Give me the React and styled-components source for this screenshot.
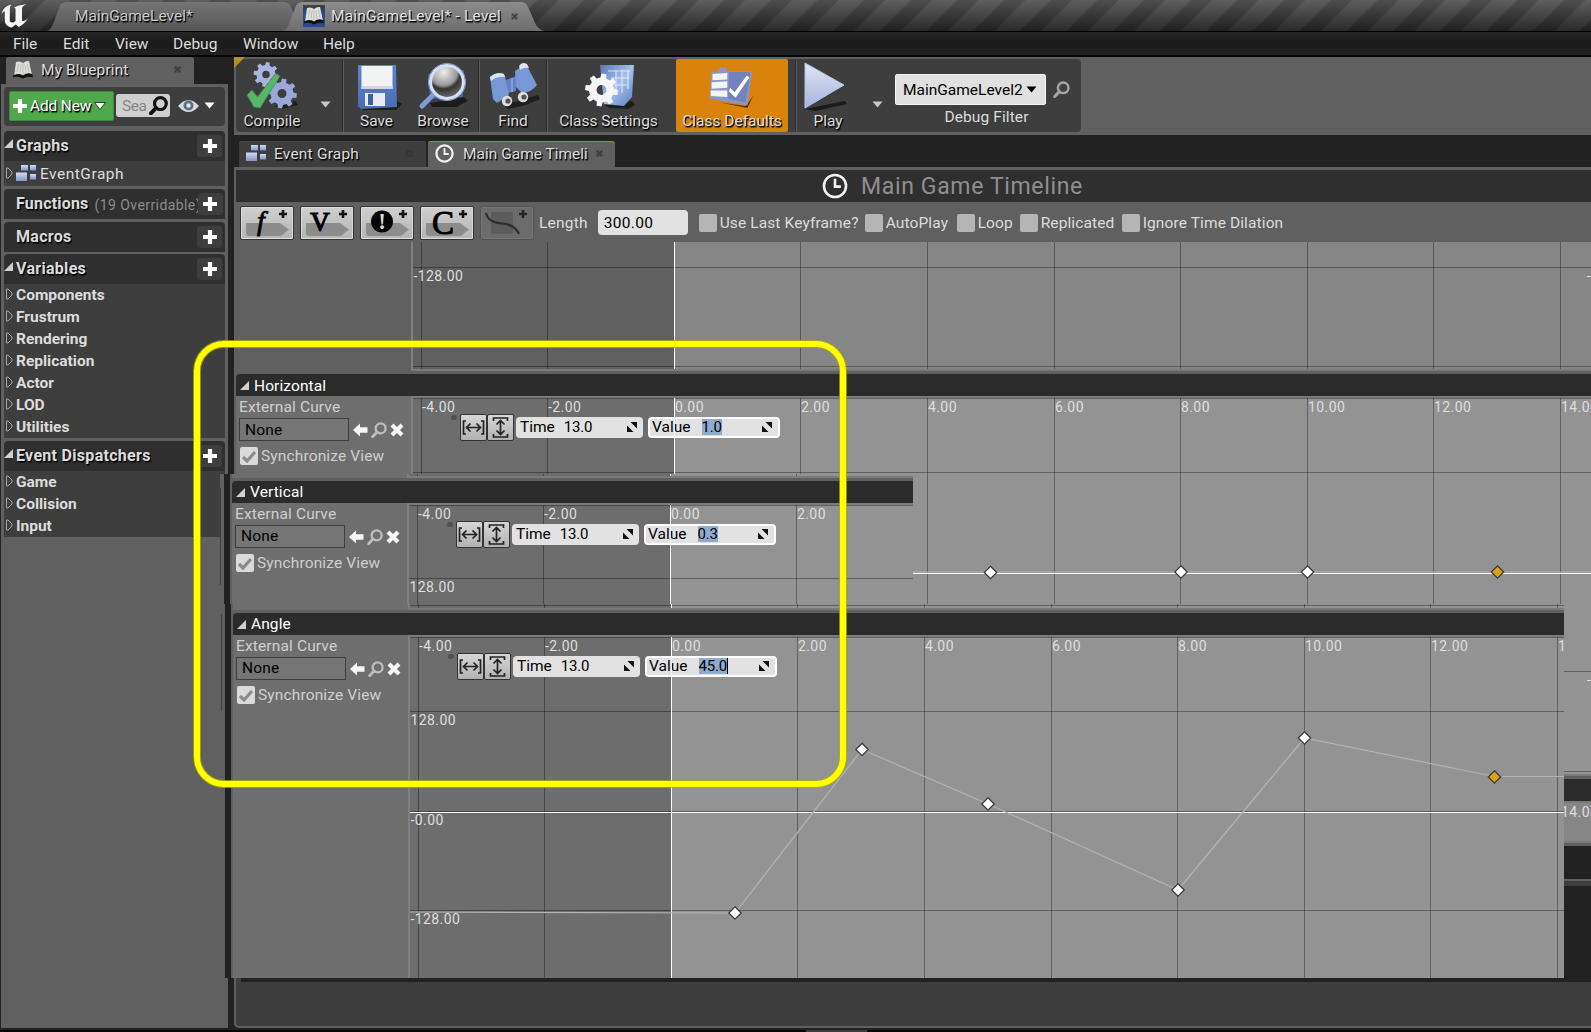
import React from 'react';
import styled, { createGlobalStyle, css } from 'styled-components';

const Global = createGlobalStyle`
  * { box-sizing: border-box; }
  body { margin: 0; background: #222; overflow: hidden; }
`;

const c = {
  frame: '#606060',
  panel: '#3e3e3e',
  dark: '#222222',
  header: '#2f2f2f',
  light: '#dcdcdc',
};
const shadow = css`text-shadow: 1px 1px 0 #000, 1px 2px 1px rgba(0,0,0,.6);`;

/* ---------- window frame ---------- */
const Window = styled.div`
  position: relative;
  width: 1591px;
  height: 1032px;
  display: flex;
  flex-direction: column;
  overflow: hidden;
  background: ${c.dark};
  color: ${c.light};
  font: 15.5px/20px Roboto, "Liberation Sans", sans-serif;
  white-space: nowrap;
`;
const TitleBar = styled.div`
  height: 31px;
  flex: none;
  display: flex;
  align-items: flex-end;
  background:
    linear-gradient(180deg, rgba(255,255,255,.12), rgba(0,0,0,.42)),
    repeating-linear-gradient(135deg, #484848 0 16px, #363636 18px 31px, #484848 33px);
`;
const LogoBox = styled.div`width: 46px; height: 31px; svg { display: block; }`;
const WinTab = styled.div`
  position: relative;
  z-index: ${p => (p.$active ? 2 : 1)};
  width: ${p => p.$w}px;
  margin-left: ${p => p.$ml || 0}px;
  height: 29px;
  display: flex;
  align-items: center;
  padding: 0 0 1px ${p => p.$pl}px;
  color: ${p => (p.$active ? '#e2e2e2' : '#c8c8c8')};
  ${shadow}
  > svg.shape { position: absolute; left: 0; top: 0; z-index: -1; }
`;
const TabText = styled.span`letter-spacing: ${p => p.$ls || 0}px; margin-left: ${p => p.$ml || 0}px;`;
const Close = styled.span`
  margin-left: auto;
  margin-right: ${p => p.$mr}px;
  display: flex;
`;
const MenuBar = styled.div`
  height: 26px;
  flex: none;
  display: flex;
  align-items: center;
  padding: 0 0 1px 13px;
  border-top: 1px solid #000;
  border-bottom: 2px solid #060606;
  background: linear-gradient(#262626, #1b1b1b 50%, #222);
`;
const MenuItem = styled.span`width: ${p => p.$w}px; padding-top: 2px;`;
const Main = styled.div`flex: 1; min-height: 0; display: flex;`;
const Status = styled.div`
  height: 4px;
  flex: none;
  border-top: 2px solid #222;
  background: #070505;
  padding-left: 806px;
  &::before { content: ''; display: block; width: 61px; height: 2px; background: #3c3c3c; }
`;
const Divider = styled.div`width: 6px; flex: none; background: #222;`;

/* ---------- blueprint side panel ---------- */
const Side = styled.div`
  width: 228px;
  flex: none;
  display: flex;
  flex-direction: column;
  padding-left: 1px;
  background: ${c.dark};
`;
const SideTab = styled.div`
  width: 188px;
  height: 27px;
  margin-left: 5px;
  display: flex;
  align-items: center;
  padding: 0 0 2px 6px;
  background: ${c.frame};
  border-radius: 2px 2px 0 0;
  ${shadow}
`;
const SideBody = styled.div`
  flex: 1;
  padding: 3px 3px 0 3px;
  display: flex;
  flex-direction: column;
  background: ${c.frame};
`;
const SideTools = styled.div`
  height: 39px;
  display: flex;
  align-items: center;
  padding: 0 0 2px 5px;
  margin-bottom: 5px;
  background: ${c.panel};
  border-radius: 4px;
`;
const AddNew = styled.div`
  width: 105px;
  height: 30px;
  display: flex;
  align-items: center;
  gap: 3px;
  padding-left: 3px;
  letter-spacing: -.15px;
  color: #fff;
  background: #4fa84b;
  border: 1px solid #3d8a3a;
  border-radius: 2px;
  ${shadow}
`;
const Search = styled.div`
  width: 54px;
  height: 23px;
  margin: 0 8px 0 2px;
  display: flex;
  align-items: center;
  padding-left: 6px;
  gap: 3px;
  letter-spacing: -.5px;
  color: #888;
  background: #cfcfcf;
  border-radius: 3px;
`;
const Eye = styled.div`display: flex; align-items: center; gap: 5px;`;
const Section = styled.div`
  display: flex;
  align-items: center;
  height: 30px;
  margin-top: ${p => p.$gap || 0}px;
  padding-right: 3px;
  background: ${c.header};
  border-radius: 4px 4px 0 0;
  font-size: 16px;
  font-weight: 700;
  letter-spacing: ${p => p.$ls ?? 0.3}px;
  ${shadow}
`;
const Arrow = styled.span`width: 12px; height: 12px; display: flex; flex: none; margin-bottom: 2px;`;
const Hint = styled.span`
  color: #8c8c8c;
  font-size: 14px;
  font-weight: 400;
  letter-spacing: .42px;
  margin-left: 6px;
  padding-top: 2px;
  text-shadow: none;
`;
const Plus = styled.span`
  width: 25px;
  height: 22px;
  flex: none;
  margin-left: auto;
  display: flex;
  align-items: center;
  justify-content: center;
  background: #3e3e3e;
  border-radius: 3px;
  ${Hint} + & { margin-left: -3px; }
`;
const Row = styled.div`
  height: ${p => p.$h || 22}px;
  display: flex;
  align-items: center;
  background: ${c.panel};
  font-weight: ${p => (p.$h ? 400 : 700)};
`;

/* ---------- editor ---------- */
const Editor = styled.div`flex: 1; min-width: 0; display: flex; flex-direction: column;`;
const ToolStrip = styled.div`
  position: relative;
  height: 78px;
  flex: none;
  padding: 2px;
  background: ${c.frame};
  &::after {
    content: '';
    position: absolute;
    left: 0;
    top: 0;
    border: solid transparent;
    border-width: 0 11px 11px 0;
    border-left: 0;
    border-top: 11px solid #b48f24;
    border-bottom: 0;
  }
`;
const Tools = styled.div`
  width: 845px;
  height: 73px;
  display: flex;
  background: ${c.panel};
  border-radius: 4px;
`;
const Tool = styled.div`
  width: ${p => p.$w}px;
  height: 73px;
  display: flex;
  flex-direction: column;
  align-items: center;
  background: ${p => (p.$on ? '#d9830c' : 'transparent')};
  border-radius: 2px;
  ${shadow}
  > svg { height: 51px; flex: none; overflow: visible; margin-left: ${p => p.$shift || 0}px; }
  > span { padding-top: .6px; }
`;
const Caret = styled.div`width: ${p => p.$w}px; padding: ${p => p.$pt || 34}px 0 0 ${p => p.$pl}px;`;
const Sep = styled.div`width: 2px; margin: 1px ${p => p.$m || 0}px 0 0; background: #5c5c5c; border-left: 1px solid #2b2b2b;`;
const Debug = styled.div`display: flex; flex-direction: column; padding-top: 15px;`;
const DebugRow = styled.div`display: flex; align-items: center; gap: 7px;`;
const Select = styled.div`
  width: 151px;
  height: 31px;
  display: flex;
  align-items: center;
  gap: 3px;
  padding-left: 7px;
  color: #000;
  background: #e0e0e0;
  border: 1px solid #f4f4f4;
  border-radius: 2px;
`;
const DebugLabel = styled.div`width: 183px; text-align: center; padding-top: 2px; letter-spacing: .1px;`;
const Tabs = styled.div`
  height: 32px;
  flex: none;
  display: flex;
  align-items: flex-end;
  gap: 2px;
  padding-left: 5px;
  background: ${c.dark};
`;
const Tab = styled.div`
  width: 187px;
  height: 26px;
  display: flex;
  align-items: center;
  padding: 0 0 2px 7px;
  background: ${p => (p.$on ? c.frame : c.panel)};
  border-top: 1px solid ${p => (p.$on ? '#a88a2e' : '#4a4a4a')};
  border-radius: 3px 3px 0 0;
  ${shadow}
`;
const DocTitle = styled.div`
  height: 35px;
  flex: none;
  display: flex;
  align-items: center;
  gap: 13px;
  padding: 0 0 0 586px;
  border-top: 3px solid ${c.frame};
  border-left: 2px solid ${c.frame};
  background: ${c.header};
  color: #8f8f8f;
  font-size: 23px;
  letter-spacing: .65px;
  > span { padding-top: 1px; }
`;
const CurveBar = styled.div`
  height: 40px;
  flex: none;
  display: flex;
  align-items: center;
  padding: 1px 0 0 6px;
  background: ${c.frame};
`;
const AddTrack = styled.div`
  width: 54px;
  height: 34px;
  margin-right: ${p => (p.$off ? 5 : 6)}px;
  flex: none;
  opacity: ${p => (p.$off ? 0.75 : 1)};
  background: ${p => (p.$off ? '#707070' : 'linear-gradient(#cfcfcf, #b4b4b4)')};
  border: 1px solid ${p => (p.$off ? '#505050' : '#333')};
  box-shadow: inset 0 0 0 1px ${p => (p.$off ? '#7d7d7d' : '#dedede')};
  border-radius: 2px;
  svg { display: block; margin: -1px; }
`;
const LengthInput = styled.div`
  width: 90px;
  height: 25px;
  margin: 0 11px 0 10px;
  padding: 3px 6px 0;
  color: #000;
  background: #e2e2e2;
  border-radius: 4px;
  letter-spacing: .35px;
`;
const Check = styled.span`
  width: 18px;
  height: 18px;
  flex: none;
  display: flex;
  align-items: center;
  justify-content: center;
  background: ${p => (p.$on ? '#dadada' : '#b5b5b5')};
  border-radius: 2px;
`;
const CheckLabel = styled.span`width: ${p => p.$w}px; padding-left: 3px; letter-spacing: .12px;`;

/* ---------- tracks ---------- */
const TrackBox = styled.div`background: ${c.frame}; padding-left: 2px; flex: none;`;
const TrackHead = styled.div`
  height: 22px;
  display: flex;
  align-items: center;
  gap: 5px;
  padding: ${p => (p.$raised ? 0 : 1)}px 0 0 4px;
  letter-spacing: .1px;
  color: #fff;
  background: #2b2b2b;
  border-radius: 4px 0 0 0;
`;
const TrackBody = styled.div`display: flex; background: ${p => (p.$dim ? '#606060' : '#6e6e6e')};`;
const TrackSide = styled.div`width: 175px; flex: none; padding: 1px 0 0 3px;`;
const CurveRow = styled.div`
  display: flex;
  align-items: center;
  gap: 3px;
  margin-top: ${p => p.$mt || 0}px;
  margin-left: ${p => p.$ml || 0}px;
  color: #cfcfcf;
  letter-spacing: .14px;
`;
const NoneBox = styled.div`
  width: 110px;
  height: 23px;
  padding: ${p => (p.$raised ? 0 : 1)}px 0 0 5px;
  color: #000;
  background: #757575;
  border: 1px solid #3e3e3e;
`;
const AssetIcons = styled.div`display: flex; align-items: center; gap: 3px; padding-left: 1px;`;
const ChartBox = styled.div`
  position: relative;
  flex: 1;
  border: solid #7b7b7b;
  border-width: ${p => (p.$top ? 2 : 0)}px 0 2px 2px;
  border-left-color: #808080;
  svg { display: block; }
`;
const Gap = styled.div`height: 3px;`;
const KeyEditor = styled.div`
  position: absolute;
  left: 40px;
  top: 16px;
  height: 27px;
  display: flex;
  align-items: center;
  color: #000;
`;
const Dot = styled.span`width: 6px; height: 5px; margin: -21px 0 0 -2px; border-radius: 3px; background: #505050;`;
const Fit = styled.span`
  width: 27px;
  height: 27px;
  margin-left: ${p => p.$ml}px;
  background: linear-gradient(#d6d6d6, #b2b2b2);
  border: 1px solid #333;
  border-radius: 2px;
  svg { margin: -1px; }
`;
const Field = styled.span`
  width: ${p => p.$w}px;
  height: 21px;
  margin: -1px 0 0 ${p => p.$ml}px;
  display: flex;
  align-items: center;
  padding: 0 5px 0 ${p => (p.$hot ? 2 : 4)}px;
  background: #e2e2e2;
  border: ${p => (p.$hot ? '2px solid #fff' : '0')};
  border-radius: 4px;
  > svg { margin-left: auto; }
`;
const Value = styled.span`
  margin-left: ${p => p.$ml}px;
  font-size: 15px;
  line-height: 16px;
  letter-spacing: -.2px;
  background: ${p => (p.$hot ? '#8fabcd' : 'transparent')};
  border-right: ${p => (p.$caret ? '1px solid #000' : '0')};
`;
const Playhead = styled.span`position: absolute; left: 261px; top: 16px; width: 1px; height: 27px; background: rgba(255,255,255,.75);`;

/* bars visible beneath the track list */
const AfterTracks = styled.div`height: 33px; flex: none; background: ${c.dark};`;
const Lower = styled.div`
  flex: 1;
  padding: 5px 0 44px 5px;
  display: flex;
  background: ${c.panel};
  border: solid ${c.frame};
  border-width: 2px 0 2px 2px;
  border-radius: 0 0 0 5px;
`;
const LowerInner = styled.div`flex: 1; background: ${c.dark};`;

/* floating strips stacked above the window */
const Strip = styled.div`
  position: absolute;
  left: ${p => p.$x}px;
  top: ${p => p.$y}px;
  width: ${p => p.$w}px;
  height: ${p => p.$h}px;
  display: flex;
  overflow: hidden;
`;
const Gutter = styled.div`
  width: 4px;
  flex: none;
  background: linear-gradient(#3e3e3e, #3e3e3e) ${p => p.$lx}px ${p => p.$ly}px / 1px 97px no-repeat, ${c.frame};
`;
const StripBody = styled.div`flex: 1; min-width: 0;`;
const Highlight = styled.div`
  position: absolute;
  left: 194px;
  top: 341px;
  width: 652px;
  height: 446px;
  border: 6px solid #ffff00;
  border-radius: 30px;
  box-shadow: 0 0 0 1px rgba(175,175,0,.75), inset 0 0 0 1px rgba(175,175,0,.75);
`;

/* ---------- small drawings ---------- */
const Tri = ({ w = 12, h = 7, fill = '#ddd', line }) => (
  <svg width={w} height={h}><path d={`M0.5 0.5H${w - 0.5}L${w / 2} ${h - 0.5}Z`} fill={fill} stroke={line || 'none'} /></svg>
);
const Open = ({ s = 9 }) => <svg width={s} height={s}><path d={`M${s} 0V${s}H0Z`} fill="#d0d0d0" /></svg>;
const Shut = () => <svg width="10" height="12"><path d="M2.500 1V11H4L8 7V5L4 1Z" fill="none" stroke="#a5a5a5" /></svg>;
const Cross = () => <svg width="14" height="14"><path d="M0 7H14M7 0V14" stroke="#fff" strokeWidth="4.200" /></svg>;
const X = () => <svg width="7" height="7"><rect width="7" height="7" fill="rgba(0,0,0,.12)" /><path d="M1 1L6 6M6 1L1 6" stroke="#3a3a3a" strokeWidth="1.300" /></svg>;
const Lens = ({ s = 18, color = '#111', w = 2.8 }) => (
  <svg width={s} height={s} viewBox="0 0 18 18">
    <circle cx="10.800" cy="7.200" r="5.600" fill="none" stroke={color} strokeWidth={w} />
    <path d="M6.500 11.500L1.800 16.500" stroke={color} strokeWidth={w + 0.6} strokeLinecap="round" />
  </svg>
);
const Book = ({ blue }) => (
  <svg width="22" height="22" viewBox="0 0 22 22">
    {blue && <rect width="22" height="22" fill="#274a8c" />}
    {blue && <rect width="22" height="5" fill="#3b3f48" />}
    <path d="M1 17L4 4Q8 2 11 4.500Q14 2 18 4L21 17Q16 15 11 18Q6 15 1 17Z" fill="#111" transform="translate(0,1.500)" />
    <path d="M2 16L4 3Q8 1.500 11 4Q14 1.500 17 2L20 15Q15 13 11 16.500Q7 14 2 16Z" fill="#dededa" />
    <path d="M11 4V16M6.500 5L5 13M9 5.500L8 13.500M13 5.500L14 13.500M15.500 5L17 13" stroke="#b4b4ae" strokeWidth=".8" fill="none" />
  </svg>
);
const Clock = ({ s, w = 2.4 }) => (
  <svg width={s} height={s} viewBox="0 0 20 20"><circle cx="10" cy="10" r="8.500" fill="none" stroke="#f2f2f2" strokeWidth={w} /><path d="M10 4.500V10.500H14.500" fill="none" stroke="#f2f2f2" strokeWidth="2" /></svg>
);
const GraphIcon = () => (
  <svg width="21" height="17" viewBox="0 0 21 17">
    <defs><linearGradient id="gi" x2="0" y2="1"><stop stopColor="#d7dcee" /><stop offset="1" stopColor="#8094cf" /></linearGradient></defs>
    <g fill="url(#gi)"><rect x="5" y="0" width="7" height="5.500" /><rect x="14" y="0" width="6" height="5.500" /><rect x="0" y="7.500" width="11" height="8.500" /><rect x="14" y="9" width="6" height="5.500" /></g>
  </svg>
);
const Logo = () => (
  <svg width="30" height="31" viewBox="0 0 30 31">
    <path d="M1.500 14C3 8.500 6.500 5.500 11.500 4.500C10 6.500 9.800 7.500 9.800 9V20.500C9.800 22.500 12.500 23.500 15.500 21V9.500C15.500 8 14.800 7.600 13.500 8C16.500 5.800 19.500 5.500 26.500 4C22.400 6 22 7.500 22 9.500V20C22 21.800 24 21.500 28 18.500C25 23 21.500 25.500 18.500 27L15.800 24.500L11.800 27.500C8 27 4.800 24.500 4.800 20.500V12C4.800 10.500 3.500 11.200 1.500 14Z" fill="#f5f5f5" />
  </svg>
);
const gear = (cx, cy, r, n = 8) => {
  const pts = [];
  for (let i = 0; i < n; i++) {
    [[-0.30, 0.76], [-0.19, 1], [0.19, 1], [0.30, 0.76]].forEach(([o, k]) => {
      const a = ((i + o) * 2 * Math.PI) / n + 0.15;
      pts.push(`${(cx + Math.cos(a) * r * k).toFixed(1)} ${(cy + Math.sin(a) * r * k).toFixed(1)}`);
    });
  }
  const h = r * 0.3;
  return `M${pts.join('L')}ZM${cx - h} ${cy}a${h} ${h} 0 1 0 ${2 * h} 0a${h} ${h} 0 1 0 ${-2 * h} 0Z`;
};
const Blue = () => (
  <defs>
    <linearGradient id="bd" x2="0" y2="1"><stop stopColor="#5f84cc" /><stop offset="1" stopColor="#4a6db5" /></linearGradient>
    <linearGradient id="ply" x2="0" y2="1"><stop stopColor="#dfe5f2" /><stop offset="1" stopColor="#a6b4de" /></linearGradient>
    <radialGradient id="gl" cx=".4" cy=".2" r=".85"><stop stopColor="#eee" /><stop offset=".48" stopColor="#999" /><stop offset=".6" stopColor="#333" /><stop offset="1" stopColor="#777" /></radialGradient>
    <linearGradient id="bg" x2="1" y2="1"><stop stopColor="#5578ba" /><stop offset=".5" stopColor="#a6c0ea" /><stop offset="1" stopColor="#5b7fc4" /></linearGradient>
  </defs>
);
const CompileIcon = () => (
  <svg width="52" height="51" viewBox="0 0 52 51"><Blue />
    <path d="M28 47L50 42L52 46L36 50Z" fill="#1e1e1e" />
    <path d={gear(20, 15.500, 12.5)} fill="#a6b6e0" fillRule="evenodd" />
    <path d={gear(36, 34.500, 15)} fill="#98a8d8" fillRule="evenodd" />
    <path d="M1 36L6 31L11.500 38L29 15L34 17L14 49L8 48Z" fill="#58b56a" stroke="#3c8f4e" strokeWidth=".8" />
  </svg>
);
const SaveIcon = () => (
  <svg width="44" height="51" viewBox="0 0 44 51">
    <path d="M4 46L42 42L47 45L41 51L8 51Z" fill="#1e1e1e" />
    <path d="M3 6H41L42 48L6 50L3 47Z" fill="url(#bd)" /><rect x="6.500" y="7" width="31" height="23" fill="#f3f3f3" /><rect x="6.500" y="27" width="31" height="3" fill="#cfd6e6" />
    <rect x="10" y="34" width="20" height="13" fill="#e9ecf3" /><rect x="13" y="35" width="5" height="11" fill="#3e5fa6" />
  </svg>
);
const BrowseIcon = () => (
  <svg width="50" height="51" viewBox="0 0 50 51">
    <path d="M12 44L46 38L50 42L38 48L14 48Z" fill="#1c1c1c" />
    <path d="M10 15L46 11L45 38L12 40Z" fill="#46619c" />
    <path d="M14 37L4 47" stroke="#7f9cdc" strokeWidth="5" strokeLinecap="round" />
    <circle cx="29" cy="23" r="16.500" fill="url(#gl)" stroke="#d5def2" strokeWidth="3.200" /><circle cx="29" cy="23" r="18.600" fill="none" stroke="#7d99d6" />
  </svg>
);
const FindIcon = () => (
  <svg width="50" height="51" viewBox="0 0 50 51">
    <path d="M16 46L50 36L52 40L38 46L20 50Z" fill="#1e1e1e" />
    <path d="M18 21L28 17V32L20 34Z" fill="#6382c4" /><path d="M24 19V33" stroke="#a8bce6" />
    <path d="M2 18Q9 12 17 17L21 36L9 44L5 40Z" fill="#7898d8" /><path d="M2 18Q9 12 16 15L17 18Q9 17 3 22Z" fill="#dfe5f0" />
    <path d="M27 12L38 5L49 26Q44 33 34 34L28 28Z" fill="#7898d8" /><path d="M31 7Q34 2 39 5L41 9Q36 8 32 11Z" fill="#dfe5f0" />
    <circle cx="19" cy="42" r="5.200" fill="#dedede" /><circle cx="20" cy="42" r="2.600" fill="#555" /><circle cx="35" cy="38" r="5.200" fill="#dedede" /><circle cx="36" cy="38" r="2.600" fill="#555" />
  </svg>
);
const SettingsIcon = () => (
  <svg width="50" height="51" viewBox="0 0 50 51">
    <path d="M20 46L48 42L51 46L44 50L26 49Z" fill="#1e1e1e" />
    <path d="M16 6H50L48 38L40 47L20 45Z" fill="url(#bg)" /><path d="M24 12H46M27 19H45M30 26H44M32 12V31M38 11V34M44 11V30" stroke="#dbe7fa" strokeWidth="1.200" />
    <path d={gear(17.5, 31, 16.5)} fill="#f6f6f6" fillRule="evenodd" />
  </svg>
);
const DefaultsIcon = () => (
  <svg width="46" height="51" viewBox="0 0 50 51">
    <path d="M14 45L42 49L50 38L44 51Z" fill="#5a3600" />
    <path d="M5 12L12 11L14 7H21L22 11L49 11L44 48L3 41Z" fill="#8797c9" /><path d="M24 12L47 12L42 45L23 41Z" fill="#7283bb" />
    <path d="M6 14L22 13V20L6 21ZM5 23L22 22V29L5 30ZM4 32L22 32V39L4 38Z" fill="#f4f4f4" /><path d="M25 29L30 34L43 16L46 18L31 40L24 33Z" fill="#fff" />
  </svg>
);
const PlayIcon = () => (
  <svg width="44" height="51" viewBox="0 0 44 51"><path d="M2 50L42 42L44 45L12 52Z" fill="#1a1a1a" /><path d="M2 4L41 26L2 49Z" fill="url(#ply)" stroke="#b7c4e8" /></svg>
);
const TrackIcon = ({ kind }) => (
  <svg width="54" height="34">
    {kind === 'curve'
      ? <rect x="11" y="6" width="22" height="22" fill="#5b5b5b" rx="2" />
      : <path d="M6 17H40L49 23.500L41 30H9Q6 30 6 27Z" fill="#8c8c8c" />}
    {kind === 'curve' && <path d="M6 7C8 15 14 17 22 17.500C31 18 36 22 39 28" fill="none" stroke="#1c1c1c" strokeWidth="2.200" />}
    {kind === '!' && <circle cx="22" cy="15.500" r="11" fill="#050505" />}
    <g fontFamily='"Liberation Serif", serif' textAnchor="middle" stroke="#000" strokeWidth=".5">
      {kind === 'f' && <text x="21" y="24" fontSize="28" fontStyle="italic" strokeWidth=".8">f</text>}
      {kind === 'V' && <text x="20" y="25" fontSize="27" strokeWidth="1.200">V</text>}
      {kind === 'C' && <text x="23" y="27.500" fontSize="33" strokeWidth="1">C</text>}
      {kind === '!' && <text x="22" y="23" fontSize="23" fontWeight="700" fill="#ddd" stroke="none">!</text>}
    </g>
    <path d="M39 8H47M43 4V12" stroke="#111" strokeWidth="2.600" />
  </svg>
);
const FitIcon = ({ v }) => (
  <svg width="27" height="27"><g fill="none" stroke="#222" strokeWidth="1.700" transform={v ? 'rotate(90 13.500 13.500)' : undefined}>
    <path d={v ? 'M7 6.500H4V20.500H7M20 6.500H23V20.500H20' : 'M6 7H3.500V20H6M21 7H23.500V20H21'} /><path d="M6.500 13.500H20.500M10.500 9.500L6.500 13.500L10.500 17.500M16.500 9.500L20.500 13.500L16.500 17.500" />
  </g></svg>
);
const Grow = () => <svg width="12" height="12"><path d="M4.500 1H11V7.500ZM1 4.500V11H7.500Z" fill="#111" /></svg>;
const EyeIcon = () => <svg width="21" height="14"><path d="M0 7Q10.500 -5 21 7Q10.500 19 0 7Z" fill="#dadada" /><circle cx="10.500" cy="6.500" r="5" fill="#5a6f8c" /><circle cx="10.500" cy="6.500" r="2.200" fill="#e8e8e8" /></svg>;
const TickIcon = () => <svg width="14" height="13"><path d="M1 7L5 11L13 2" fill="none" stroke="#8b8b8b" strokeWidth="3.200" /></svg>;
const AssetIcon = () => (
  <AssetIcons>
    <svg width="15" height="14"><path d="M0 7L7 .5V4.200H14.500V9.800H7V13.500Z" fill="#f6f6f6" /></svg>
    <Lens s={16} color="#bdbdbd" w={2.6} />
    <svg width="14" height="14"><path d="M2 2L12 12M12 2L2 12" stroke="#f6f6f6" strokeWidth="4.200" /></svg>
  </AssetIcons>
);

/* ---------- chart ---------- */
const ZERO = 261.3;
const STEP = 126.6;
function Chart({ h, dim, labels, rows = [], yLabels = [], zeroY, keys, line, dash }) {
  const ks = [-2, -1, 0, 1, 2, 3, 4, 5, 6, 7];
  return (
    <svg width="1178" height={h}>
      <rect width="261" height={h} fill={dim ? '#606060' : '#6d6d6d'} />
      <rect x="261" width="917" height={h} fill={dim ? '#868686' : '#939393'} />
      {rows.map(y => <rect key={y} y={y} width="1178" height="1" fill="#000" opacity=".34" />)}
      {ks.map(k => <rect key={k} x={Math.floor(ZERO + k * STEP)} width="1" height={h} fill={k ? '#000' : '#fff'} opacity={k ? 0.34 : 1} />)}
      {zeroY && <rect y={zeroY} width="1178" height="1" fill="#fff" />}
      {line && <polyline points={line} fill="none" stroke="#b3b3b3" strokeWidth="1.200" />}
      {keys && keys.map(([x, y], i) => (
        <path key={x} d={`M${x} ${y - 6.2}L${x + 6.2} ${y}L${x} ${y + 6.2}L${x - 6.2} ${y}Z`} fill={i === keys.length - 1 ? '#dba013' : '#fff'} stroke="#3a3a3a" strokeWidth="1.300" />
      ))}
      <g fill="#dedede" fontSize="14" letterSpacing=".4">
        {labels && ks.map(k => <text key={k} x={Math.floor(ZERO + k * STEP) + 1} y="14">{(k * 2).toFixed(2)}</text>)}
        {yLabels.map(([t, y]) => <text key={t} x="0.500" y={y}>{t}</text>)}
      </g>
      {dash && <rect x="1174" y={dash} width="4" height="1" fill="#e0e0e0" />}
    </svg>
  );
}

function Track({ name, value, caret, dim, raised, gap = true, ...chart }) {
  return (
    <TrackBox>
      {name && <TrackHead $raised={raised}><Open />{name}</TrackHead>}
      <TrackBody $dim={dim}>
        <TrackSide>
          {value && <>
            <CurveRow>External Curve</CurveRow>
            <CurveRow $mt={1}><NoneBox $raised={raised}>None</NoneBox><AssetIcon /></CurveRow>
            <CurveRow $mt={5} $ml={1}><Check $on><TickIcon /></Check><span>Synchronize View</span></CurveRow>
          </>}
        </TrackSide>
        <ChartBox $top={!!name}>
          <Chart dim={dim} {...chart} />
          {value && <>
            <KeyEditor>
              <Dot />
              <Fit $ml={3}><FitIcon /></Fit>
              <Fit $ml={0}><FitIcon v /></Fit>
              <Field $w={127} $ml={2}>Time<Value $ml={9}>13.0</Value><Grow /></Field>
              <Field $w={132} $ml={5} $hot>Value<Value $ml={11} $hot $caret={caret}>{value}</Value><Grow /></Field>
            </KeyEditor>
            <Playhead />
          </>}
        </ChartBox>
      </TrackBody>
      {gap && <Gap />}
    </TrackBox>
  );
}

const SECTIONS = [
  { name: 'Variables', gap: 2, rows: ['Components', 'Frustrum', 'Rendering', 'Replication', 'Actor', 'LOD', 'Utilities'] },
  { name: 'Event Dispatchers', gap: 3, rows: ['Game', 'Collision', 'Input'] },
];

function Sidebar() {
  return (
    <Side>
      <SideTab><Book /><TabText $ml={7} $ls={0.1}>My Blueprint</TabText><Close $mr={13}><X /></Close></SideTab>
      <SideBody>
        <SideTools>
          <AddNew><Cross />Add New<Tri w={12} h={8} fill="#fff" line="#1d4a1c" /></AddNew>
          <Search>Sea<Lens s={19} w={3} /></Search>
          <Eye><EyeIcon /><Tri w={11} h={7} fill="#fff" /></Eye>
        </SideTools>
        <Section><Arrow><Open /></Arrow>Graphs<Plus><Cross /></Plus></Section>
        <Row $h={25}><Arrow><Shut /></Arrow><GraphIcon /><TabText $ml={3} $ls={0.5}>EventGraph</TabText></Row>
        <Section $gap={3} $ls={0.2}><Arrow />Functions<Hint>(19 Overridable)</Hint><Plus><Cross /></Plus></Section>
        <Section $gap={3}><Arrow />Macros<Plus><Cross /></Plus></Section>
        {SECTIONS.map(s => (
          <React.Fragment key={s.name}>
            <Section $gap={s.gap}><Arrow><Open /></Arrow>{s.name}<Plus><Cross /></Plus></Section>
            {s.rows.map(r => <Row key={r}><Arrow><Shut /></Arrow>{r}</Row>)}
          </React.Fragment>
        ))}
      </SideBody>
    </Side>
  );
}

function Toolbar() {
  return (
    <ToolStrip>
      <Tools>
        <Tool $w={72}><CompileIcon /><span>Compile</span></Tool>
        <Caret $w={34} $pl={12}><Tri w={11} fill="#c8c8c8" /></Caret>
        <Sep $m={1} />
        <Tool $w={63}><SaveIcon /><span>Save</span></Tool>
        <Tool $w={70}><BrowseIcon /><span>Browse</span></Tool>
        <Sep $m={0} />
        <Tool $w={66} $shift={-1}><FindIcon /><span>Find</span></Tool>
        <Sep $m={0} />
        <Tool $w={121}><SettingsIcon /><span>Class Settings</span></Tool>
        <Caret $w={7} $pl={0} />
        <Tool $w={112} $on $shift={-5}><DefaultsIcon /><span>Class Defaults</span></Tool>
        <Caret $w={7} $pl={0} />
        <Sep $m={1} />
        <Tool $w={60} $shift={-6}><PlayIcon /><span>Play</span></Tool>
        <Caret $w={37} $pl={14}><Tri w={11} fill="#c8c8c8" /></Caret>
        <Debug>
          <DebugRow><Select>MainGameLevel2<Tri w={11} fill="#000" /></Select><Lens s={17} color="#a5a5a5" w={2.6} /></DebugRow>
          <DebugLabel>Debug Filter</DebugLabel>
        </Debug>
      </Tools>
    </ToolStrip>
  );
}

export default function App() {
  return (
    <Window>
      <Global />
      <TitleBar>
        <LogoBox><Logo /></LogoBox>
        <WinTab $w={250} $pl={29}>
          <svg className="shape" width="250" height="29"><defs><linearGradient id="t1" x2="0" y2="1"><stop stopColor="#757575" /><stop offset="1" stopColor="#565656" /></linearGradient></defs><path d="M0 29Q5 28 7 22L13 6Q15 0 20 0H238Q243 0 245 5L250 16V29Z" fill="url(#t1)" /></svg>
          <TabText>MainGameLevel*</TabText>
        </WinTab>
        <WinTab $w={264} $ml={-15} $pl={22} $active>
          <svg className="shape" width="264" height="29"><defs><linearGradient id="t2" x2="0" y2="1"><stop stopColor="#8c8c8c" /><stop offset="1" stopColor="#6e6e6e" /></linearGradient></defs><path d="M0 29Q6 28 8 22L14 6Q16 0 21 0H240Q245 0 247 5L255 23Q258 28 264 29Z" fill="url(#t2)" /></svg>
          <Book blue /><TabText $ml={6} $ls={0.2}>MainGameLevel* - Level</TabText><Close $mr={27}><X /></Close>
        </WinTab>
      </TitleBar>
      <MenuBar>
        {[['File', 50], ['Edit', 52], ['View', 58], ['Debug', 70], ['Window', 80], ['Help', 50]].map(([t, w]) => <MenuItem key={t} $w={w}>{t}</MenuItem>)}
      </MenuBar>
      <Main>
        <Sidebar />
        <Divider />
        <Editor>
          <Toolbar />
          <Tabs>
            <Tab><GraphIcon /><TabText $ml={7} $ls={0.2}>Event Graph</TabText><Close $mr={13}><X /></Close></Tab>
            <Tab $on><Clock s={19} /><TabText $ml={9} $ls={0}>Main Game Timeli</TabText><Close $mr={12}><X /></Close></Tab>
          </Tabs>
          <DocTitle><Clock s={26} w={2} /><span>Main Game Timeline</span></DocTitle>
          <CurveBar>
            {['f', 'V', '!', 'C', 'curve'].map(k => <AddTrack key={k} $off={k === 'curve'}><TrackIcon kind={k} /></AddTrack>)}
            <TabText $ls={0.2}>Length</TabText>
            <LengthInput>300.00</LengthInput>
            {[['Use Last Keyframe?', 148], ['AutoPlay', 74], ['Loop', 45], ['Replicated', 84], ['Ignore Time Dilation', 150]].map(([t, w]) => (
              <React.Fragment key={t}><Check /><CheckLabel $w={w}>{t}</CheckLabel></React.Fragment>
            ))}
          </CurveBar>
          <Track dim h={127} rows={[25, 124]} yLabels={[['-128.00', 39]]} dash={34} />
          <Track name="Horizontal" value="1.0" h={376} labels rows={[0, 74, 273, 373]} zeroY={175} dash={282}
            line="0,174 1178,174" keys={[[577.5, 174.5], [768, 174], [894.5, 174], [1084.500, 174]]} />
          <Track name="Zoom" dim h={38} labels gap />
          <AfterTracks />
          <Lower><LowerInner /></Lower>
        </Editor>
      </Main>
      <Status />

      <Strip $x={220} $y={474} $w={693} $h={130}>
        <Gutter $lx={0} $ly={14} />
        <Divider />
        <StripBody>
          <Track h={2} />
          <Track name="Vertical" raised value="0.3" h={110} labels rows={[0, 73]} yLabels={[['128.00', 87]]} />
        </StripBody>
      </Strip>
      <Strip $x={221} $y={604} $w={1343} $h={374}>
        <Gutter $lx={0} $ly={10} />
        <Divider />
        <StripBody>
          <Track h={4} rows={[1]} />
          <Track name="Angle" raised value="45.0" caret h={350} labels rows={[0, 74, 174, 273]} zeroY={175}
            yLabels={[['128.00', 88], ['-0.00', 188], ['-128.00', 287]]}
            line="0,275 325,276 452,112.500 578,167 768,253 894.500,101 1084.500,139.500 1178,139.500"
            keys={[[325, 276], [452, 112.5], [578, 167], [768, 253], [894.5, 101], [1084.500, 140]]} />
        </StripBody>
      </Strip>
      <Highlight />
    </Window>
  );
}
